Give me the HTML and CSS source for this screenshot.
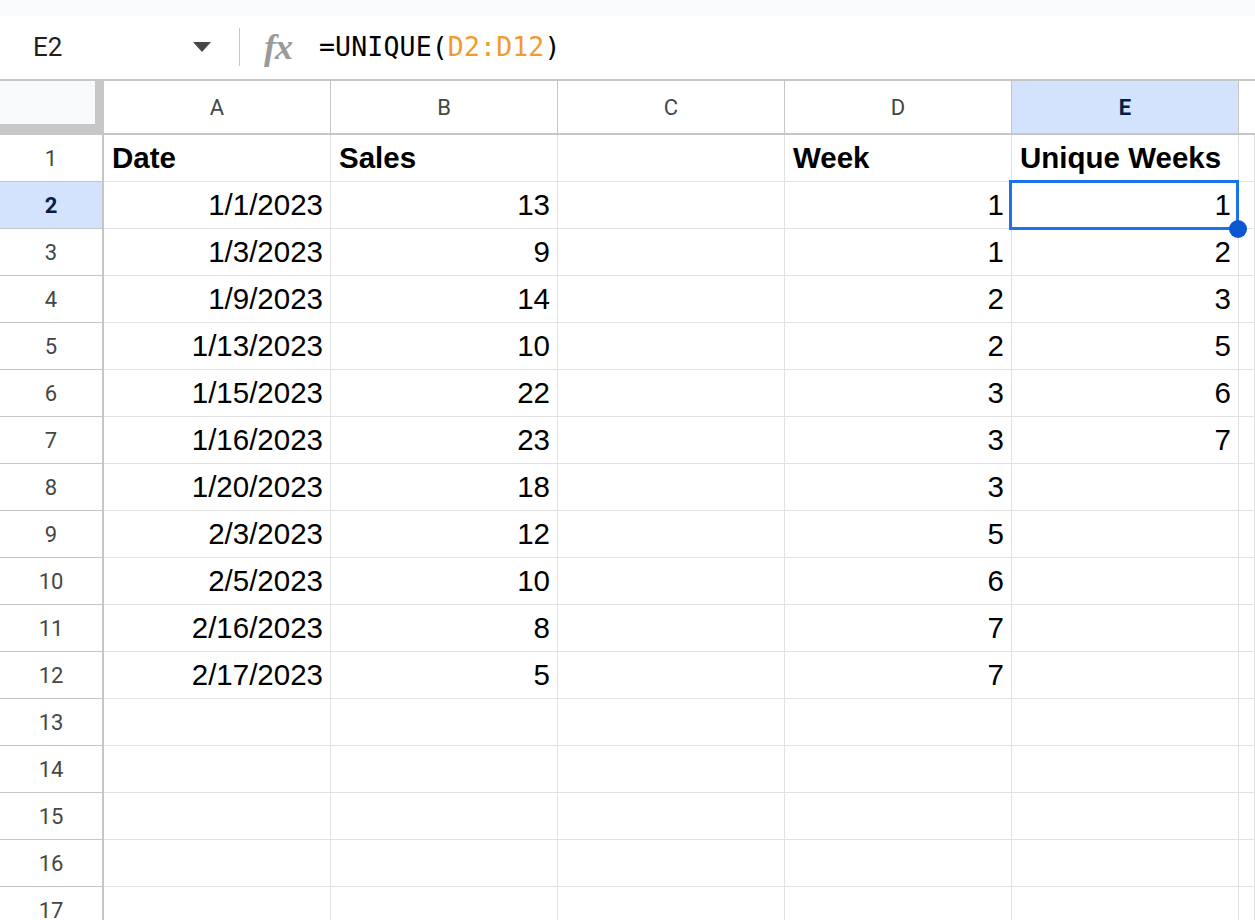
FILE: index.html
```html
<!DOCTYPE html>
<html lang="en">
<head>
<meta charset="utf-8">
<title>Sheet</title>
<link rel="stylesheet" href="styles.css">
</head>
<body>
<div class="topstrip"></div>
<div class="formula-bar">
  <div class="namebox"><span class="name">E2</span><span class="caret"></span></div>
  <div class="sep"></div>
  <div class="fx">fx</div>
  <div class="formula">=UNIQUE(<span class="rng">D2:D12</span>)</div>
</div>
<div class="sheet">
  <div class="corner"></div>
  <div class="colh">A</div><div class="colh">B</div><div class="colh">C</div><div class="colh">D</div><div class="colh colh-sel">E</div><div class="colh colh-last"></div>

  <div class="rowh">1</div><div class="c b">Date</div><div class="c b">Sales</div><div class="c"></div><div class="c b">Week</div><div class="c b">Unique Weeks</div><div class="c"></div>
  <div class="rowh rowh-sel">2</div><div class="c r">1/1/2023</div><div class="c r">13</div><div class="c"></div><div class="c r">1</div><div class="c r sel">1<span class="handle"></span></div><div class="c"></div>
  <div class="rowh">3</div><div class="c r">1/3/2023</div><div class="c r">9</div><div class="c"></div><div class="c r">1</div><div class="c r">2</div><div class="c"></div>
  <div class="rowh">4</div><div class="c r">1/9/2023</div><div class="c r">14</div><div class="c"></div><div class="c r">2</div><div class="c r">3</div><div class="c"></div>
  <div class="rowh">5</div><div class="c r">1/13/2023</div><div class="c r">10</div><div class="c"></div><div class="c r">2</div><div class="c r">5</div><div class="c"></div>
  <div class="rowh">6</div><div class="c r">1/15/2023</div><div class="c r">22</div><div class="c"></div><div class="c r">3</div><div class="c r">6</div><div class="c"></div>
  <div class="rowh">7</div><div class="c r">1/16/2023</div><div class="c r">23</div><div class="c"></div><div class="c r">3</div><div class="c r">7</div><div class="c"></div>
  <div class="rowh">8</div><div class="c r">1/20/2023</div><div class="c r">18</div><div class="c"></div><div class="c r">3</div><div class="c"></div><div class="c"></div>
  <div class="rowh">9</div><div class="c r">2/3/2023</div><div class="c r">12</div><div class="c"></div><div class="c r">5</div><div class="c"></div><div class="c"></div>
  <div class="rowh">10</div><div class="c r">2/5/2023</div><div class="c r">10</div><div class="c"></div><div class="c r">6</div><div class="c"></div><div class="c"></div>
  <div class="rowh">11</div><div class="c r">2/16/2023</div><div class="c r">8</div><div class="c"></div><div class="c r">7</div><div class="c"></div><div class="c"></div>
  <div class="rowh">12</div><div class="c r">2/17/2023</div><div class="c r">5</div><div class="c"></div><div class="c r">7</div><div class="c"></div><div class="c"></div>
  <div class="rowh">13</div><div class="c"></div><div class="c"></div><div class="c"></div><div class="c"></div><div class="c"></div><div class="c"></div>
  <div class="rowh">14</div><div class="c"></div><div class="c"></div><div class="c"></div><div class="c"></div><div class="c"></div><div class="c"></div>
  <div class="rowh">15</div><div class="c"></div><div class="c"></div><div class="c"></div><div class="c"></div><div class="c"></div><div class="c"></div>
  <div class="rowh">16</div><div class="c"></div><div class="c"></div><div class="c"></div><div class="c"></div><div class="c"></div><div class="c"></div>
  <div class="rowh">17</div><div class="c"></div><div class="c"></div><div class="c"></div><div class="c"></div><div class="c"></div><div class="c"></div>
</div>
</body>
</html>
```

FILE: styles.css
```css
* { box-sizing: border-box; }
html, body { margin: 0; padding: 0; }
body {
  width: 1255px;
  height: 920px;
  overflow: hidden;
  background: #ffffff;
  font-family: "Liberation Sans", Arial, sans-serif;
}
.topstrip {
  height: 16px;
  background: #f9fbfd;
}
.formula-bar {
  height: 65px;
  display: flex;
  align-items: center;
  border-bottom: 2px solid #c4c7c5;
  padding-bottom: 2px;
}
.namebox {
  width: 211px;
  padding-left: 33px;
  display: flex;
  align-items: center;
  justify-content: space-between;
}
.name {
  font-family: Roboto, "Liberation Sans", sans-serif;
  font-size: 26px;
  color: #1f1f1f;
}
.caret {
  width: 0;
  height: 0;
  border-left: 9px solid transparent;
  border-right: 9px solid transparent;
  border-top: 10px solid #444746;
}
.sep {
  margin-left: 28px;
  width: 1px;
  height: 38px;
  background: #c4c7c5;
}
.fx {
  margin-left: 24px;
  font-family: "Liberation Serif", "DejaVu Serif", serif;
  font-style: italic;
  font-weight: bold;
  font-size: 36px;
  color: #9a9a9a;
  letter-spacing: -1px;
  line-height: 1;
  width: 34px;
}
.formula {
  margin-left: 21px;
  font-family: "DejaVu Sans Mono", "Liberation Mono", monospace;
  font-size: 26.5px;
  color: #000000;
  letter-spacing: 0.15px;
}
.rng { color: #f39a2e; }

.sheet {
  display: grid;
  grid-template-columns: 104px repeat(5, 227px) 1fr;
  grid-template-rows: 54px;
  grid-auto-rows: 47px;
}
.corner {
  background: #f8f9fa;
  border-right: 9px solid #c7c7c7;
  border-bottom: 11px solid #c7c7c7;
}
.colh {
  display: flex;
  align-items: center;
  justify-content: center;
  font-family: Roboto, "Liberation Sans", sans-serif;
  font-size: 22px;
  color: #444746;
  border-right: 1px solid #c4c7c5;
  border-bottom: 2px solid #c4c7c5;
  padding-top: 1px;
}
.colh-sel {
  background: #d3e3fd;
  color: #041e49;
  font-weight: bold;
}
.colh-last { border-right: none; }
.rowh {
  display: flex;
  align-items: center;
  justify-content: center;
  font-family: Roboto, "Liberation Sans", sans-serif;
  font-size: 22px;
  color: #444746;
  border-right: 2px solid #c4c7c5;
  border-bottom: 1px solid #c4c7c5;
}
.rowh-sel {
  background: #d3e3fd;
  color: #041e49;
  font-weight: bold;
}
.c {
  display: flex;
  align-items: flex-end;
  padding: 0 7px 6px 8px;
  font-size: 29.5px;
  color: #000000;
  border-right: 1px solid #e1e1e1;
  border-bottom: 1px solid #e1e1e1;
  white-space: nowrap;
  line-height: 34px;
}
.b { font-weight: bold; }
.r { justify-content: flex-end; }
.sel { position: relative; }
.sel::after {
  content: "";
  position: absolute;
  left: -3px;
  top: -2px;
  right: -1px;
  bottom: -2px;
  border: 3px solid #1a73e8;
  z-index: 2;
}
.handle {
  position: absolute;
  left: 217px;
  top: 38px;
  width: 18px;
  height: 18px;
  border-radius: 50%;
  background: #0b57d0;
  z-index: 3;
}
```
